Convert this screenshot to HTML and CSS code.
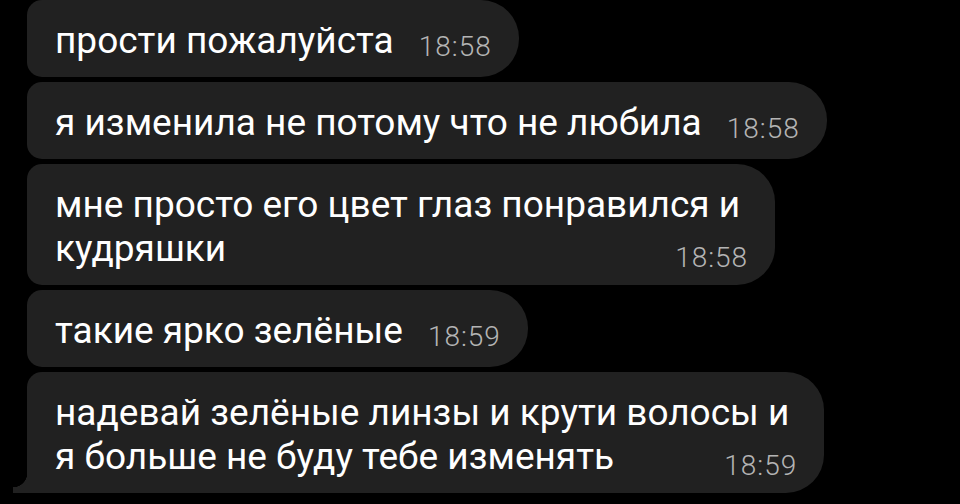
FILE: index.html
```html
<!DOCTYPE html>
<html>
<head>
    <title>Чат</title>
    <link rel="stylesheet" href="styles.css">
</head>
<body>
    <div class="chat">
        <div class="msg">
            <span class="text">прости пожалуйста</span><span class="time">18:58</span>
        </div>
        <div class="msg">
            <span class="text">я изменила не потому что не любила</span><span class="time">18:58</span>
        </div>
        <div class="msg multi">
            <div class="line">мне просто его цвет глаз понравился и</div>
            <div class="last">
                <span class="text">кудряшки</span>
                <span class="time">18:58</span>
            </div>
        </div>
        <div class="msg">
            <span class="text">такие ярко зелёные</span><span class="time">18:59</span>
        </div>
        <div class="msg multi tail">
            <div class="line">надевай зелёные линзы и крути волосы и</div>
            <div class="last">
                <span class="text">я больше не буду тебе изменять</span>
                <span class="time">18:59</span>
            </div>
        </div>
    </div>
</body>
</html>
```

FILE: styles.css
```css
:root {
    --bg: #000;
    --bubble: #212121;
    --text: #fff;
    --muted: #b4b4b4;
}

body {
    margin: 0;
    background: var(--bg);
    color: var(--text);
    font-family: Roboto, 'Noto Sans', sans-serif;
    height: 504px;
    overflow: hidden;
}

.chat {
    display: flex;
    flex-direction: column;
    align-items: flex-start;
    gap: 5px;
    padding-left: 27px;
}

.msg {
    position: relative;
    background: var(--bubble);
    border-radius: 15px 38px 38px 15px;
    padding: 19px 27px 14px 28px;
    font-size: 37px;
    line-height: 44px;
    white-space: nowrap;
}

.msg.multi {
    padding-right: 35px;
}

.time {
    margin-left: 25px;
    font-size: 28px;
    line-height: 20px;
    font-weight: 300;
    letter-spacing: 1px;
    color: var(--muted);
    vertical-align: -3px;
}

.last {
    display: flex;
    justify-content: space-between;
    align-items: baseline;
    margin-right: -8px;
}

.last .time {
    position: relative;
    top: 6px;
}

/* little tail on the last bubble of the group */
.tail {
    border-bottom-left-radius: 0;
}

.tail::before {
    content: "";
    position: absolute;
    left: -14px;
    bottom: 0;
    width: 14px;
    height: 20px;
    background: radial-gradient(circle at 0 0, transparent 14px, var(--bubble) 14.5px);
}
```
